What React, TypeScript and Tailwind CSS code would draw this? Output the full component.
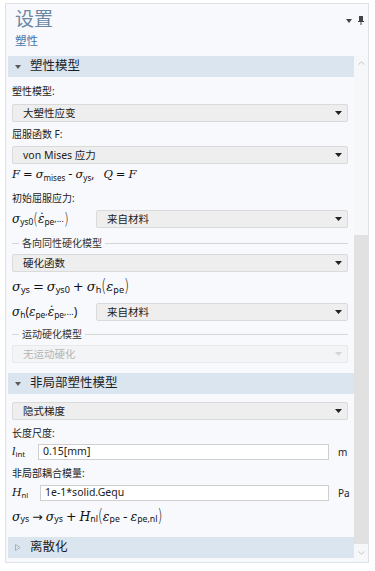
import type { ReactNode } from 'react'

const SANS = "font-['Noto_Sans','Noto_Sans_CJK_SC',sans-serif]"

function Caret({ faint = false }: { faint?: boolean }) {
  return (
    <svg width="7" height="4" viewBox="0 0 7 4">
      <path d="M0 0h7L3.5 4z" fill={faint ? '#d4d4d4' : '#222'} />
    </svg>
  )
}

function Select({ text, disabled = false, className = '' }: { text: string; disabled?: boolean; className?: string }) {
  return (
    <div
      className={`flex h-[18px] items-center justify-between rounded-[2px] border pl-[10px] pr-[5px] ${
        disabled ? 'border-[#e8e9eb] bg-[#f3f4f6] text-[#b4b4b4]' : 'border-[#dadada] bg-[#eeeeee] text-[#222]'
      } ${className}`}
    >
      <span className="text-[10.5px] leading-none">{text}</span>
      <Caret faint={disabled} />
    </div>
  )
}

function Section({ title, open = true, className = '' }: { title: string; open?: boolean; className?: string }) {
  return (
    <div className={`flex h-[21px] items-center bg-[#dbe5f0] pl-[7px] ${className}`}>
      {open ? (
        <svg width="6" height="4" viewBox="0 0 6 4">
          <path d="M0 0h6L3 4z" fill="#5a5a5a" />
        </svg>
      ) : (
        <svg width="6" height="7" viewBox="0 0 6 7">
          <path d="M0.5 0.5L5 3.5L0.5 6.5z" fill="none" stroke="#a8a8a8" strokeWidth="0.9" />
        </svg>
      )}
      <span className="ml-[9px] text-[12.5px] leading-none text-[#1e1e1e]">{title}</span>
    </div>
  )
}

function Label({ children, className = '' }: { children: ReactNode; className?: string }) {
  return <div className={`flex h-[14px] items-center text-[10px] text-[#222] ${className}`}>{children}</div>
}

function Group({ title, className = '' }: { title: string; className?: string }) {
  return (
    <div className={`flex h-[14px] items-center gap-[3px] ${className}`}>
      <div className="h-px w-[7px] bg-[#d6d6d6]" />
      <span className="text-[10px] text-[#333]">{title}</span>
      <div className="h-px flex-1 bg-[#d6d6d6]" />
    </div>
  )
}

// math bits
function Mi({ children }: { children: ReactNode }) {
  return <span className="font-['DejaVu_Serif',serif] italic">{children}</span>
}
function Sub({ children }: { children: ReactNode }) {
  return <span className={`${SANS} relative top-[3px] text-[0.7em] not-italic`}>{children}</span>
}
function Paren({ c }: { c: string }) {
  return <span className="inline-block scale-y-[1.35] font-['DejaVu_Sans',sans-serif] font-light">{c}</span>
}
function Op({ children }: { children: ReactNode }) {
  return <span className="mx-[3px] font-['DejaVu_Sans',sans-serif]">{children}</span>
}

function TextInput({ value }: { value: string }) {
  return (
    <div className="flex h-[16px] flex-1 items-center border border-[#cfcfcf] bg-white pl-[4px] text-[10.5px] text-[#222]">
      {value}
    </div>
  )
}

export default function App() {
  return (
    <div className={`h-[571px] w-[375px] overflow-hidden bg-white pl-[5px] pt-[3px] ${SANS}`}>
      <div className="flex h-[560px] w-[364px] flex-col border border-[#dfe2e7] bg-[#f8f9fc]">
        {/* panel header */}
        <div className="relative h-[52px] shrink-0 pl-[9px]">
          <div className="pt-[2px] text-[19px] leading-[26px] text-[#6a87a4]">设置</div>
          <div className="mt-[1px] text-[11.5px] leading-[16px] text-[#4777ab]">塑性</div>
          <div className="absolute right-[4px] top-[12px] flex items-center gap-[6px]">
            <svg width="6" height="4" viewBox="0 0 6 4">
              <path d="M0 0h6L3 4z" fill="#444" />
            </svg>
            <svg width="6" height="9" viewBox="0 0 6 9">
              <rect x="1" y="0" width="4" height="5" fill="#444" />
              <rect x="0" y="5" width="6" height="1" fill="#444" />
              <rect x="2.5" y="6" width="1" height="3" fill="#444" />
            </svg>
          </div>
        </div>

        <div className="flex min-h-0 flex-1">
          {/* content */}
          <div className="w-[348px] pl-[2px]">
            <Section title="塑性模型" />
            <div className="pl-[4px] pr-[6px]">
              <Label className="mt-[7px]">塑性模型:</Label>
              <Select text="大塑性应变" className="mt-[6px]" />
              <Label className="mt-[5px]">屈服函数 F:</Label>
              <Select text="von Mises 应力" className="mt-[5px]" />
              <div className="mt-[3px] flex h-[16px] items-center whitespace-pre text-[11.5px] text-[#111]">
                <Mi>F</Mi>
                <Op>=</Op>
                <Mi>σ</Mi>
                <Sub>mises</Sub>
                <Op>-</Op>
                <Mi>σ</Mi>
                <Sub>ys</Sub>
                <span>,   </span>
                <Mi>Q</Mi>
                <Op>=</Op>
                <Mi>F</Mi>
              </div>
              <Label className="mt-[8px]">初始屈服应力:</Label>
              <div className="mt-[5px] flex h-[18px] items-center">
                <div className="flex w-[84px] items-center text-[12px] text-[#111]">
                  <Mi>σ</Mi>
                  <Sub>ys0</Sub>
                  <Paren c="(" />
                  <Mi>ε̇</Mi>
                  <Sub>pe</Sub>
                  <span className="text-[9px]">,...</span>
                  <Paren c=")" />
                </div>
                <Select text="来自材料" className="flex-1" />
              </div>
              <Group title="各向同性硬化模型" className="mt-[8px]" />
              <Select text="硬化函数" className="mt-[4px]" />
              <div className="mt-[4px] flex h-[22px] items-center text-[13px] text-[#111]">
                <Mi>σ</Mi>
                <Sub>ys</Sub>
                <Op>=</Op>
                <Mi>σ</Mi>
                <Sub>ys0</Sub>
                <Op>+</Op>
                <Mi>σ</Mi>
                <Sub>h</Sub>
                <Paren c="(" />
                <Mi>ε</Mi>
                <Sub>pe</Sub>
                <Paren c=")" />
              </div>
              <div className="mt-[5px] flex h-[18px] items-center">
                <div className="flex w-[84px] items-center text-[12px] text-[#111]">
                  <Mi>σ</Mi>
                  <Sub>h</Sub>
                  <span>(</span>
                  <Mi>ε</Mi>
                  <Sub>pe</Sub>
                  <span className="text-[9px]">,</span>
                  <Mi>ε̇</Mi>
                  <Sub>pe</Sub>
                  <span className="text-[9px]">,...</span>
                  <span>)</span>
                </div>
                <Select text="来自材料" className="flex-1" />
              </div>
              <Group title="运动硬化模型" className="mt-[6px]" />
              <Select text="无运动硬化" disabled className="mt-[4px]" />
            </div>

            <Section title="非局部塑性模型" className="mt-[10px]" />
            <div className="pl-[4px] pr-[6px]">
              <Select text="隐式梯度" className="mt-[8px]" />
              <Label className="mt-[6px]">长度尺度:</Label>
              <div className="mt-[4px] flex h-[16px] items-center">
                <div className="flex w-[26px] items-center text-[11px] text-[#111]">
                  <Mi>l</Mi>
                  <Sub>int</Sub>
                </div>
                <TextInput value="0.15[mm]" />
                <span className="w-[19px] pl-[9px] text-[10px] text-[#222]">m</span>
              </div>
              <Label className="mt-[6px]">非局部耦合模量:</Label>
              <div className="mt-[5px] flex h-[16px] items-center">
                <div className="flex w-[28px] items-center text-[11px] text-[#111]">
                  <Mi>H</Mi>
                  <Sub>nl</Sub>
                </div>
                <TextInput value="1e-1*solid.Gequ" />
                <span className="w-[19px] pl-[9px] text-[10px] text-[#222]">Pa</span>
              </div>
              <div className="mt-[5px] flex h-[22px] items-center text-[12.5px] text-[#111]">
                <Mi>σ</Mi>
                <Sub>ys</Sub>
                <Op>→</Op>
                <Mi>σ</Mi>
                <Sub>ys</Sub>
                <Op>+</Op>
                <Mi>H</Mi>
                <Sub>nl</Sub>
                <Paren c="(" />
                <Mi>ε</Mi>
                <Sub>pe</Sub>
                <Op>-</Op>
                <Mi>ε</Mi>
                <Sub>pe,nl</Sub>
                <Paren c=")" />
              </div>
            </div>
            <Section title="离散化" open={false} className="mt-[9px]" />
          </div>

          {/* scrollbar */}
          <div className="flex w-[14px] flex-col bg-[#f6f7f9]">
            <div className="flex h-[14px] items-center justify-center">
              <svg width="7" height="4" viewBox="0 0 7 4">
                <path d="M0.5 3.5L3.5 0.8L6.5 3.5" fill="none" stroke="#c4c4c4" strokeWidth="1" />
              </svg>
            </div>
            <div className="h-[165px]" />
            <div className="flex-1 bg-[#e1e1e1]" />
            <div className="flex h-[18px] items-center justify-center">
              <svg width="7" height="4" viewBox="0 0 7 4">
                <path d="M0.5 0.5L3.5 3.2L6.5 0.5" fill="none" stroke="#c4c4c4" strokeWidth="1" />
              </svg>
            </div>
          </div>
        </div>
      </div>
    </div>
  )
}
